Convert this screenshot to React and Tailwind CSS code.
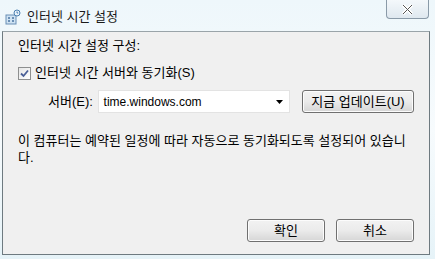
import React from 'react';

const FONT = { fontFamily: '"Liberation Sans", "Noto Sans CJK KR", sans-serif' };

function WinButton({ children, className = '' }) {
  return (
    <button
      className={`h-[23px] rounded-[3px] border border-[#707070] bg-gradient-to-b from-[#f2f2f2] via-[#ebebeb] to-[#d6d6d6] text-[13px] text-black leading-none shadow-[inset_0_0_0_1px_#fcfcfc] ${className}`}
    >
      {children}
    </button>
  );
}

function TitleIcon() {
  return (
    <svg width="16" height="16" viewBox="0 0 16 16">
      <rect x="1" y="6" width="10" height="9" fill="#cfe3f3" stroke="#6a8fb5" />
      <rect x="3" y="8" width="2" height="2" fill="#6a8fb5" />
      <rect x="7" y="8" width="2" height="2" fill="#6a8fb5" />
      <rect x="3" y="11" width="2" height="2" fill="#6a8fb5" />
      <rect x="7" y="11" width="2" height="2" fill="#6a8fb5" />
      <circle cx="12" cy="4" r="3" fill="#e9f3fb" stroke="#4a7fb0" />
      <path d="M12 2.5V4h1.2" stroke="#4a7fb0" fill="none" />
    </svg>
  );
}

export default function App() {
  return (
    <div
      className="w-[435px] h-[259px] overflow-hidden bg-gradient-to-b from-[#eef7fb] via-[#f7fbfd] to-[#e6f3f8] flex flex-col text-[13px] text-black"
      style={FONT}
    >
      {/* Title bar */}
      <div className="h-[31px] flex items-start shrink-0">
        <div className="flex items-center gap-[6px] pl-[5px] pt-[7px]">
          <TitleIcon />
          <span className="text-[13px] text-[#1a1a1a]">인터넷 시간 설정</span>
        </div>
        <div className="flex-1" />
        <div className="mr-[6px] w-[43px] h-[19px] rounded-b-[4px] border border-t-0 border-[#8a9aa8] bg-gradient-to-b from-[#f4f8fb] to-[#dfe8ef] flex items-center justify-center">
          <svg width="13" height="11" viewBox="0 0 13 11">
            <path d="M2 1l9 9M11 1l-9 9" stroke="#fff" strokeWidth="3.2" />
            <path d="M2 1l9 9M11 1l-9 9" stroke="#555" strokeWidth="1" />
          </svg>
        </div>
      </div>

      {/* Client area */}
      <div className="mx-[2px] w-[428px] h-[224px] bg-[#f0f0f0] border border-[#6e7a80] border-t-[#9aa4a9] flex flex-col px-[15px]">
        <div className="pt-[5px] h-[27px] leading-[18px]">인터넷 시간 설정 구성:</div>

        <label className="flex items-center gap-[4px] h-[18px] mt-[5px]">
          <span className="w-[13px] h-[13px] border border-[#8e8f8f] bg-gradient-to-br from-[#e6e6e6] to-white flex items-center justify-center">
            <svg width="9" height="9" viewBox="0 0 9 9">
              <path d="M1 4.5l2.5 2.5L8 1.5" stroke="#4a5f97" strokeWidth="1.8" fill="none" />
            </svg>
          </span>
          <span>인터넷 시간 서버와 동기화(S)</span>
        </label>

        <div className="flex items-center mt-[8px] h-[23px]">
          <span className="ml-[30px] w-[50px]">서버(E):</span>
          <div className="w-[194px] h-[23px] bg-white border border-[#e3e3e3] flex items-center pl-[5px] pr-[6px]">
            <span className="flex-1 text-[12px]">time.windows.com</span>
            <svg width="7" height="4" viewBox="0 0 7 4">
              <path d="M0 0h7L3.5 4z" fill="#000" />
            </svg>
          </div>
          <WinButton className="ml-[12px] w-[113px]">지금 업데이트(U)</WinButton>
        </div>

        <p className="mt-[19px] leading-[17px] w-[405px]">
          이 컴퓨터는 예약된 일정에 따라 자동으로 동기화되도록 설정되어 있습니
          <br />
          다.
        </p>

        <div className="flex-1" />
        <div className="flex justify-end gap-[11px] pb-[12px] pr-[0px]">
          <WinButton className="w-[78px]">확인</WinButton>
          <WinButton className="w-[78px]">취소</WinButton>
        </div>
      </div>
    </div>
  );
}
